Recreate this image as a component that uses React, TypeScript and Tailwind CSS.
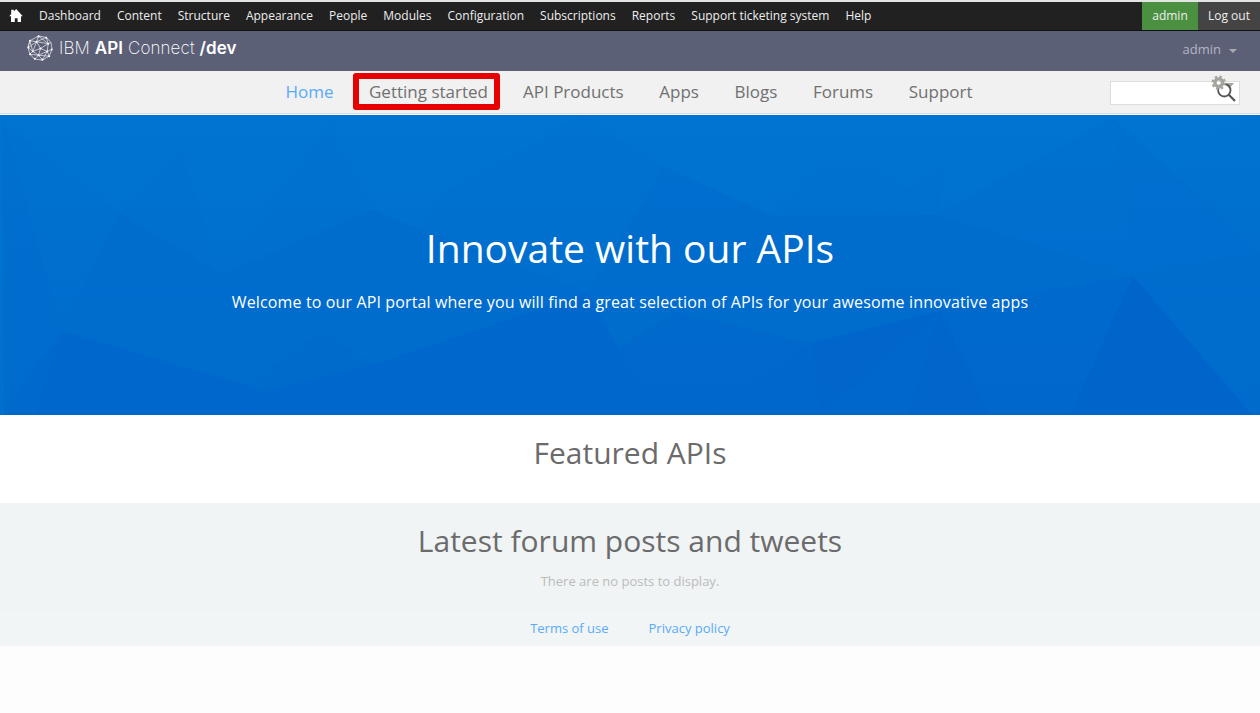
const adminLinks = [
  'Dashboard', 'Content', 'Structure', 'Appearance', 'People', 'Modules',
  'Configuration', 'Subscriptions', 'Reports', 'Support ticketing system', 'Help',
];
const navLinks = ['API Products', 'Apps', 'Blogs', 'Forums', 'Support'];

function HomeIcon() {
  return (
    <svg className="-mt-px h-[13px] w-[14px]" viewBox="0 0 14 12" preserveAspectRatio="none" fill="#fff">
      <path d="M7.200 0 13.800 6.600H12V12H8.600V8.500H5.800V12H2V6.600H.2L2.200 4.600V.6H4.800V2.200Z" />
    </svg>
  );
}

function Globe() {
  return (
    <svg className="h-[26px] w-[26px]" viewBox="0 0 27 27" fill="none" stroke="#e8e9ed" strokeWidth=".75">
      <path d="M12 1 20 2.5 25 8 26 15 23 22 16 26 8 25 3 20 1 13 3 6ZM12 1 10 7 3 6 6 17 1 13 10 7 20 2.5 22 9 25 8M12 1 22 9 10 7 14 14 22 9 21 17 26 15M6 17 14 14 21 17 16 26 12 21 6 17 3 20 12 21 8 25M14 14 12 21 21 17 23 22 12 21M3 6 1 13M6 17 10 7" />
      <g fill="#fff" stroke="none">
        <circle cx="12" cy="1.5" r="1.1" /><circle cx="20" cy="2.8" r="1" /><circle cx="3" cy="6" r="1" />
        <circle cx="10" cy="7" r="1" /><circle cx="22" cy="9" r="1" /><circle cx="1.5" cy="13" r="1" />
        <circle cx="14" cy="14" r="1.1" /><circle cx="6" cy="17" r="1" /><circle cx="21" cy="17" r="1" />
        <circle cx="12" cy="21" r="1" /><circle cx="23" cy="22" r="1.1" /><circle cx="16" cy="25.6" r="1.1" />
        <circle cx="8" cy="24.7" r="1" /><circle cx="3.2" cy="20" r="1" /><circle cx="25.6" cy="15" r="1" />
      </g>
    </svg>
  );
}

function HeroBackdrop() {
  return (
    <svg className="absolute inset-0 h-full w-full" viewBox="0 0 1260 300" preserveAspectRatio="none">
      <defs>
        <linearGradient id="sky" x1="0" y1="0" x2="0" y2="1">
          <stop offset="0" stopColor="#0074d1" />
          <stop offset=".6" stopColor="#006fcf" />
          <stop offset="1" stopColor="#006dcd" />
        </linearGradient>
      </defs>
      <rect width="1260" height="300" fill="url(#sky)" />
      <g fill="#0069cb">
        <path opacity=".28" d="M3 5 62 216 36 300H4Z" />
        <path opacity=".15" d="M3 5 120 99 62 216ZM180 35 222 160 120 99ZM330 8 372 95 222 160ZM582 0 588 178 420 114 440 80ZM665 52 588 178 582 3Z" />
        <path opacity=".4" d="M120 99 222 160 372 95 420 114 588 178 665 52 775 102 936 100 1056 137 1133 161 1260 138V300H0L62 216Z" />
        <path opacity=".25" d="M1113 3 1260 138 1133 161 1126 95Z" />
        <path opacity=".2" d="M1113 3 936 100 1056 137 1133 161 1126 95Z" />
        <path opacity=".12" d="M840 20 908 75 949 48 936 100 775 102ZM1168 55 1190 37 1260 0V138Z" />
        <path opacity=".35" d="M936 100 1056 137 975 178 850 190ZM775 102 936 100 860 182Z" />
        <path opacity=".3" d="M262 260 320 217 376 249 265 276Z" />
      </g>
      <g fill="#0064cb">
        <path opacity=".6" d="M36 300 62 216 265 276 376 249 420 234 588 178 618 234 648 300Z" />
        <path opacity=".3" d="M618 234 675 197 812 228 940 196 1015 180 1133 161 1252 300H648Z" />
        <path opacity=".5" d="M812 228 940 196 990 300H715Z" />
        <path opacity=".65" d="M1133 161 1252 300H1070Z" />
      </g>
      <g fill="#0073cf">
        <path opacity=".1" d="M62 216 98 300H240L265 276ZM265 276 376 249 415 300H240Z" />
        <path opacity=".12" d="M812 228 820 300H715ZM940 196 907 300H820Z" />
        <path opacity=".5" d="M0 0H2L4 300H0Z" />
      </g>
    </svg>
  );
}

function SearchIcons() {
  return (
    <svg className="absolute -top-[8px] right-[2px] h-[30px] w-[28px]" viewBox="0 0 28 30" fill="none">
      <path d="M15.500 9H25L20.500 14.500Z" fill="#a5a5a0" />
      <circle cx="15.300" cy="16.300" r="6.200" stroke="#555" strokeWidth="1.800" />
      <path d="M19.800 20.800 26 27" stroke="#555" strokeWidth="2.200" />
      <circle cx="9.700" cy="8.700" r="3.800" stroke="#a5a5a0" strokeWidth="3.400" />
      <circle cx="9.700" cy="8.700" r="5.900" stroke="#a5a5a0" strokeWidth="2.600" strokeDasharray="2.400 2.234" />
    </svg>
  );
}

export default function App() {
  return (
    <div className="flex min-h-[713px] w-[1260px] flex-col overflow-hidden bg-[#fdfdfd] font-['Open_Sans',sans-serif] text-[#6b6b6b]">
      <div className="h-0.5 bg-[#e4e4e4]" />
      <div className="flex h-[29px] items-stretch border-b border-[#111] bg-[#212121] text-[12px] leading-[28px] text-[#eee]">
        <div className="flex w-[39px] items-center pl-[9px]"><HomeIcon /></div>
        <nav className="flex gap-4 whitespace-nowrap">
          {adminLinks.map((l) => <a key={l}>{l}</a>)}
        </nav>
        <a className="ml-auto w-14 bg-[#4a9040] text-center">admin</a>
        <a className="w-[62px] bg-[#444] text-center">Log out</a>
      </div>
      <header className="flex h-10 justify-between bg-[#5c6077] pl-[27px] pr-[23px]">
        <div className="flex pt-1">
          <Globe />
          <div className="ml-[6px] whitespace-nowrap font-['Inter',sans-serif] text-[17px] font-extralight leading-[27px] tracking-[0.1px] text-white">
            IBM <b className="font-semibold">API</b> Connect <b className="font-semibold">/dev</b>
          </div>
        </div>
        <div className="flex items-center gap-2 pb-[3px] text-[13px] text-[#b2b5c3]">
          admin
          <svg className="mt-0.5 h-1 w-2" viewBox="0 0 8 4"><path d="M0 0H8L4 4Z" fill="#aaa9ad" /></svg>
        </div>
      </header>
      <div className="flex h-[43px] border-b border-[#ddd] bg-[#f1f1f1] text-[17px] text-[#707070]">
        <nav className="flex flex-1 whitespace-nowrap pl-[285px] leading-[41px]">
          <a className="w-[68px] pl-[0.5px] text-[#5aaafa]">Home</a>
          <a className="mt-0.5 h-[37px] w-[147px] rounded-[3px] border-6 border-[#e60000] pl-[10px] leading-[25px]">Getting started</a>
          <div className="ml-[23px] flex gap-[35.6px]">
            {navLinks.map((l) => <a key={l}>{l}</a>)}
          </div>
        </nav>
        <div className="relative mr-5 mt-[10px] h-6 w-[130px] border border-[#deded9] bg-white"><SearchIcons /></div>
      </div>
      <section className="relative mt-px h-[300px] overflow-hidden text-center text-white">
        <HeroBackdrop />
        <div className="relative pt-[105px]">
          <h1 className="text-[39px] leading-[56px]">Innovate with our APIs</h1>
          <p className="pt-[14px] text-[16px] leading-6 tracking-[0.135px]">Welcome to our API portal where you will find a great selection of APIs for your awesome innovative apps</p>
        </div>
      </section>
      <section className="h-[88px] bg-white pt-[17px] text-center">
        <h2 className="text-[30px] leading-[42px]">Featured APIs</h2>
      </section>
      <section className="h-[108px] bg-[#f0f4f5] pt-[17px] text-center">
        <h2 className="text-[30px] leading-[42px]">Latest forum posts and tweets</h2>
        <p className="pt-[9px] text-[13px] leading-5 text-[#bbb]">There are no posts to display.</p>
      </section>
      <footer className="flex h-[35px] justify-center gap-10 bg-[#f1f5f6] text-[13px] leading-[35px] text-[#5aaafa]">
        <a>Terms of use</a>
        <a>Privacy policy</a>
      </footer>
    </div>
  );
}
